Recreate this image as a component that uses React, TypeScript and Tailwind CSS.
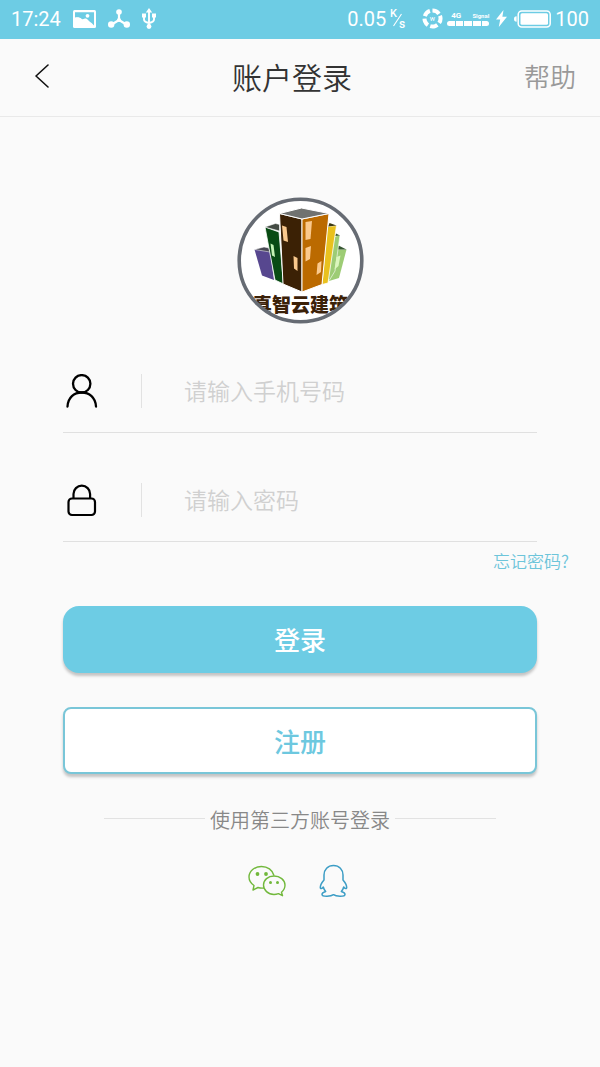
import { useState } from 'react';
import type { ReactNode } from 'react';
import { clsx } from 'clsx';

const StatusBar = () => (
    <div className="flex h-[39px] items-center justify-between bg-[#6dcce4] px-[11px] pb-0.5 font-['Roboto',sans-serif] text-xl leading-6 text-white">
        <div className="flex items-center gap-3">
            <span>17:24</span>
            {/* Picture */}
            <svg className="h-[18px] w-[23px]" viewBox="0 0 23 18" aria-hidden="true">
                <rect width="23" height="18" rx="1.5" fill="#fff" />
                <path d="M2 2.2h19v13.3c-3-3.5-5-4-7-6.5L12 8.6 9 9.4 5.5 7.5 2 8z" fill="#6dcce4" />
                <path d="M2 7.5c4-1 6 .5 8 2.5l3-1.5 1 1-1 2 4 5H2z" fill="#fff" />
                <circle cx="14.5" cy="5.8" r="1.9" fill="#fff" />
            </svg>
            {/* Share */}
            <svg className="h-[19px] w-[22px]" viewBox="0 0 22 19" fill="#fff" stroke="#fff" aria-hidden="true">
                <path d="M11 3v8M11 11l-8 5M11 11l8 5" fill="none" strokeWidth="2.2" />
                <circle cx="11" cy="3" r="2.8" stroke="none" />
                <circle cx="3.2" cy="15.5" r="3.2" stroke="none" />
                <circle cx="18.8" cy="15.5" r="3.2" stroke="none" />
                <circle cx="11" cy="11" r="2" stroke="none" />
            </svg>
            {/* USB */}
            <svg className="h-[21px] w-[14px]" viewBox="0 0 14 21" fill="#fff" aria-hidden="true">
                <path d="M7 3v15M2 7v4.5q0 2.5 5 3.5M12 7v4.5q0 2.5-5 3.5" fill="none" stroke="#fff" strokeWidth="1.9" />
                <path d="M7 0l3.2 4.5H3.8zM0 5.5h4v4H0zM10 5.5h4v4h-4z" />
                <circle cx="7" cy="18.5" r="2.4" />
            </svg>
        </div>
        <div className="flex items-center">
            <span>0.05</span>
            <svg className="ml-1 mr-3 h-6 w-5" viewBox="0 0 20 24" fill="#fff" aria-hidden="true">
                <text x="0" y="10" className="font-['Roboto',sans-serif] text-[11px] font-medium">K</text>
                <text x="9" y="21" className="font-['Roboto',sans-serif] text-[12px] font-medium">s</text>
                <path d="M11.5 7L3.5 19" stroke="#fff" strokeWidth="1.1" />
            </svg>
            <svg className="mr-1 h-[21px] w-[21px]" viewBox="0 0 21 21" aria-hidden="true">
                <circle cx="10.5" cy="10.5" r="8" fill="none" stroke="#fff" strokeWidth="4" strokeDasharray="7.5 2.55" transform="rotate(-20 10.5 10.5)" />
                <text x="10.5" y="13" textAnchor="middle" fill="#fff" className="font-['Roboto',sans-serif] text-[7px]">w</text>
            </svg>
            <div className="mr-[7px] flex w-[42px] flex-col gap-px">
                <div className="flex justify-between pl-1 text-[8px] font-bold leading-[9px]">
                    <span>4G</span>
                    <span className="text-[6px]">Signal</span>
                </div>
                <div className="grid h-[5px] grid-cols-5 gap-px overflow-hidden rounded-sm">
                    <i className="bg-white" />
                    <i className="bg-white" />
                    <i className="bg-white" />
                    <i className="bg-white" />
                    <i className="bg-white" />
                </div>
            </div>
            <svg className="mr-[7px] h-[17px] w-[11px]" viewBox="0 0 11 17" fill="#fff" aria-hidden="true">
                <path d="M7.5 0L0 9.5h4.2L2.8 17 11 6.8H6.4z" />
            </svg>
            <svg className="mr-1 h-[18px] w-[37px]" viewBox="0 0 37 18" aria-hidden="true">
                <path d="M2.6 6.2v5.6Q0 11.8 0 9t2.6-2.8z" fill="#fff" />
                <rect x="4.2" y="1" width="32" height="16" rx="3.5" fill="none" stroke="#fff" strokeWidth="1.5" />
                <rect x="6.5" y="3.2" width="27.5" height="11.6" rx="1.5" fill="#fff" />
            </svg>
            <span>100</span>
        </div>
    </div>
);

const Header = () => (
    <header className="grid h-[78px] grid-cols-[36px_1fr_52px] items-center border-b border-[#e9e9e9] px-6 pb-1">
        <button type="button" aria-label="返回" className="pl-[11px]">
            <svg className="h-6 w-[14px]" viewBox="0 0 14 24" fill="none" stroke="#111" strokeWidth="1.6" strokeLinecap="round" strokeLinejoin="round">
                <path d="M13 1L1 12l12 11" />
            </svg>
        </button>
        <h1 className="text-center text-[30px] font-[350] leading-10 text-[#333]">账户登录</h1>
        <button type="button" className="whitespace-nowrap text-[26px] font-[350] leading-10 text-[#999]">帮助</button>
    </header>
);

const Logo = () => (
    <svg className="mx-auto h-[127px] w-[127px]" viewBox="0 0 127 127" role="img" aria-label="真智云建筑">
        <clipPath id="logo-clip">
            <circle cx="63.5" cy="63.5" r="61" />
        </clipPath>
        <circle cx="63.5" cy="63.5" r="61" fill="#fff" />
        <g clipPath="url(#logo-clip)">
            <path d="M17.5 52.5L33 54l4 29-12-4.5z" fill="#57478f" />
            <path d="M17.5 52.5L27 50l5 1 1 4z" fill="#4a4a55" stroke="#fff" strokeWidth=".5" />
            <path d="M28 30l14 5 4.5 52-8.5-4z" fill="#084b13" stroke="#fff" strokeWidth=".8" />
            <path d="M28 30l10.5-3.5 4 1V34z" fill="#444c44" stroke="#fff" strokeWidth=".5" />
            <path d="M99.5 52.5h10L102 81l-10 3z" fill="#9dcc75" />
            <path d="M99.5 52.5l2-4 8 4z" fill="#365732" />
            <path d="M97.5 39.5L103 38l-5 36-5.5 9h-3z" fill="#9dcc75" stroke="#fff" strokeWidth=".6" />
            <path d="M98 39l1-2.5 4 2z" fill="#365732" />
            <path d="M90 29.5l9.5-1L91 86l-6 1.5z" fill="#e9c11e" stroke="#fff" strokeWidth=".8" />
            <path d="M91 29.5l1.5-3.5 7 2.5z" fill="#3d3a12" />
            <path d="M42.5 16.5L65 22v73l-19-8z" fill="#3b2105" stroke="#fff" />
            <path d="M65 22l27-5.5-7 71L65 95z" fill="#bb6a00" stroke="#fff" />
            <path d="M42.5 16.5l22-5.5L92 16.5 65 22z" fill="#707270" stroke="#fff" />
            <path d="M45 28.5l4.5 1.5L51 45l-4.500-1.500zM56.500 59l4 2v13l-3.500-2.500zM68.500 25l6.500-1-1.500 18-5 1zM68.500 51l5.500-2-1 13-4.500 2.500zM80.500 66.500l4-2.500-.5 11-4.500 3z" fill="#fac98d" />
            <path d="M33.5 46.5l3 1.5L38 60l-3-1.500z" fill="#c4f3b4" />
            <path d="M99.5 60l4-1.500-2 10.500-4 3.500z" fill="#dcf6bd" />
            <text x="63.5" y="115" textAnchor="middle" fill="#3b2108" className="font-['Noto_Sans_CJK_SC',sans-serif] text-[19px] font-black">真智云建筑</text>
        </g>
        <circle cx="63.5" cy="63.5" r="61.3" fill="none" stroke="#666b73" strokeWidth="3.6" />
    </svg>
);

type FieldProps = {
    id: string;
    label: string;
    type: string;
    value: string;
    onChange: (value: string) => void;
    icon: ReactNode;
};

const Field = ({ id, label, type, value, onChange, icon }: FieldProps) => (
    <div className="flex h-[109px] items-center border-b border-[#e0e0e0] pt-[26px]">
        <label htmlFor={id} aria-label={label} className="flex h-[34px] w-[79px] shrink-0 items-center border-r border-[#e2e2e2] pl-[3px]">
            {icon}
        </label>
        <input
            id={id}
            type={type}
            value={value}
            onChange={(e) => onChange(e.target.value)}
            placeholder={label}
            className="ml-[42px] h-10 w-full min-w-0 bg-transparent pb-0.5 text-[23px] font-[350] text-[#333] outline-none placeholder:text-[#d0d0d0]"
        />
    </div>
);

const UserIcon = () => (
    <svg className="h-[34px] w-[32px]" viewBox="0 0 32 34" fill="none" stroke="#000" strokeWidth="2.3" strokeLinecap="round" aria-hidden="true">
        <circle cx="15.7" cy="9.8" r="8.7" />
        <path d="M1.5 32.5C2 23.5 8 18.5 15.7 18.5s13.800 5 14.300 14" />
    </svg>
);

const LockIcon = () => (
    <svg className="h-[34px] w-[32px]" viewBox="0 0 32 34" fill="none" stroke="#000" strokeWidth="2.2" aria-hidden="true">
        <rect x="2.5" y="15.5" width="26.5" height="16.5" rx="3.5" />
        <path d="M7.5 15.5V11a8.300 8.300 0 0 1 16.600 0v4.500" />
    </svg>
);

const WechatIcon = () => (
    <svg className="h-8 w-[38px]" viewBox="0 0 38 32" fill="none" stroke="#71b83b" strokeWidth="1.4" strokeLinejoin="round" aria-hidden="true">
        <path d="M26 10.500C24.500 5 19.500 1.500 13.500 1.500 6.500 1.500 1 6.200 1 12c0 3.500 2 6.400 5 8.500L5 25l5-2.500c2 .6 4 .8 6 .5" />
        <path d="M26 11c-6 0-10.500 4-10.500 9S20 29.500 26 29.500c1.500 0 3-.3 4.500-.8l4 2-1-3.500c2.200-1.800 3.500-4.200 3.500-7.200 0-5-5-9-11-9z" />
        <g fill="#71b83b" stroke="none">
            <circle cx="9.5" cy="9" r="1.9" />
            <circle cx="18" cy="9" r="1.9" />
            <circle cx="22.5" cy="17.5" r="1.5" />
            <circle cx="29.5" cy="17.5" r="1.5" />
        </g>
    </svg>
);

const QQIcon = () => (
    <svg className="h-[34px] w-[30px]" viewBox="0 0 30 34" fill="none" stroke="#3c9dc5" strokeWidth="1.5" strokeLinejoin="round" aria-hidden="true">
        <path d="M14.500 1.500C8.800 1.500 5 5.500 5 11v5C2.800 18.500 1.300 21 1.300 23.500c0 1.800 1.700 1.200 3-.5.4 1.700 1.200 3.200 2.400 4.500-2.400.7-3.700 1.600-3.700 3 0 2.300 8.500 2.500 11.500.2 3 2.300 11.500 2.100 11.500-.2 0-1.400-1.300-2.300-3.700-3 1.200-1.300 2-2.800 2.400-4.500 1.300 1.700 3 2.300 3 .5 0-2.500-1.500-5-3.700-7.500v-5c0-5.500-3.800-9.500-9.500-9.500z" />
    </svg>
);

const buttonBase = 'h-[67px] w-full text-[26px] font-medium leading-10 shadow-[0_3px_3px_rgba(0,0,0,0.22)]';

export default function App() {
    const [phone, setPhone] = useState('');
    const [password, setPassword] = useState('');

    return (
        <div className="min-h-screen bg-[#fafafa] font-['Noto_Sans_CJK_SC',sans-serif]">
            <StatusBar />
            <Header />
            <main className="pt-20">
                <Logo />
                <form onSubmit={(e) => e.preventDefault()}>
                    <div className="px-[63px]">
                        <Field id="phone" label="请输入手机号码" type="tel" value={phone} onChange={setPhone} icon={<UserIcon />} />
                        <Field id="password" label="请输入密码" type="password" value={password} onChange={setPassword} icon={<LockIcon />} />
                    </div>
                    <div className="flex h-16 justify-end pr-[31px] pt-[7px]">
                        <a href="#forgot" className="text-[17px] font-[350] leading-6 text-[#6dc5da]">忘记密码?</a>
                    </div>
                    <div className="flex flex-col gap-[34px] px-[63px]">
                        <button type="submit" className={clsx(buttonBase, 'rounded-2xl bg-[#6dcce4] pb-0.5 text-white')}>登录</button>
                        <button type="button" className={clsx(buttonBase, 'rounded-lg border-2 border-[#79c6d8] bg-white text-[#6dc8df]')}>注册</button>
                    </div>
                </form>

                {/* Third-party login */}
                <div className="mt-8 flex items-center gap-[5px] px-[104px]">
                    <div className="mb-1 h-px flex-1 bg-[#e2e2e2]" />
                    <h2 className="text-xl font-[350] leading-7 text-[#888]">使用第三方账号登录</h2>
                    <div className="mb-1 h-px flex-1 bg-[#e2e2e2]" />
                </div>
                <div className="mt-[30px] flex items-center justify-center gap-[33px] pr-1">
                    <button type="button" aria-label="微信登录"><WechatIcon /></button>
                    <button type="button" aria-label="QQ登录"><QQIcon /></button>
                </div>
            </main>
        </div>
    );
}
